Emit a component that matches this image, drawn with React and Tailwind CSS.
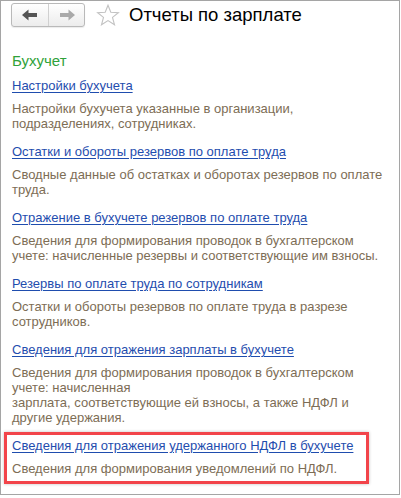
import React from 'react';

const reports = [
  {
    title: 'Настройки бухучета',
    text: 'Настройки бухучета указанные в организации, подразделениях, сотрудниках.',
  },
  {
    title: 'Остатки и обороты резервов по оплате труда',
    text: 'Сводные данные об остатках и оборотах резервов по оплате труда.',
  },
  {
    title: 'Отражение в бухучете резервов по оплате труда',
    text: 'Сведения для формирования проводок в бухгалтерском учете: начисленные резервы и соответствующие им взносы.',
  },
  {
    title: 'Резервы по оплате труда по сотрудникам',
    text: 'Остатки и обороты резервов по оплате труда в разрезе сотрудников.',
  },
  {
    title: 'Сведения для отражения зарплаты в бухучете',
    text: (
      <>
        Сведения для формирования проводок в бухгалтерском учете: начисленная
        <br />
        зарплата, соответствующие ей взносы, а также НДФЛ и другие удержания.
      </>
    ),
  },
  {
    title: 'Сведения для отражения удержанного НДФЛ в бухучете',
    text: 'Сведения для формирования уведомлений по НДФЛ.',
  },
];

const ReportItem = ({ title, text }) => (
  <div className="pb-[13px]">
    <a href="#" className="block text-[13px] leading-[16px] text-[#1f4dae] underline underline-offset-[2px]">
      {title}
    </a>
    <p className="mt-[7px] w-[380px] text-[13px] leading-[15px] text-[#7d6d55]">{text}</p>
  </div>
);

const App = () => {
  return (
    <div
      className="relative w-[401px] h-[498px] bg-white overflow-hidden"
      style={{ fontFamily: '"Liberation Sans", Arial, sans-serif' }}
    >
      <div className="w-[400px] h-[495px] border border-[#a5a5a5]">
        {/* Header */}
        <div className="flex items-center h-[24px] mt-[2px] pl-[10px]">
          <div className="flex h-[24px] w-[74px] rounded-[3px] border border-[#b9b9b9] bg-gradient-to-b from-white to-[#ececec] shadow-[0_1px_1px_rgba(0,0,0,0.08)]">
            <div className="flex w-[37px] items-center justify-center border-r border-[#d0d0d0]">
              <svg width="16" height="12" viewBox="0 0 16 12">
                <path d="M0 6 L6.5 0.5 V4 H15 V8 H6.5 V11.5 Z" fill="#555" />
              </svg>
            </div>
            <div className="flex flex-1 items-center justify-center">
              <svg width="16" height="12" viewBox="0 0 16 12">
                <path d="M16 6 L9.5 0.5 V4 H1 V8 H9.5 V11.5 Z" fill="#a9a9a9" />
              </svg>
            </div>
          </div>
          <svg className="ml-[11px]" width="24" height="22" viewBox="0 0 24 22">
            <path
              d="M12 1.2 L14.8 8.2 L22.4 8.6 L16.5 13.4 L18.5 20.8 L12 16.6 L5.5 20.8 L7.5 13.4 L1.6 8.6 L9.2 8.2 Z"
              fill="none"
              stroke="#c2c2c2"
              strokeWidth="1.1"
              strokeLinejoin="miter"
            />
          </svg>
          <h1 className="ml-[9px] text-[18.5px] leading-[24px] text-black">Отчеты по зарплате</h1>
        </div>

        {/* Content */}
        <div className="pl-[11px] pt-[25px]">
          <h2 className="text-[15px] leading-[18px] text-[#2fa23a]">Бухучет</h2>
          <div className="mt-[8px]">
            {reports.map((r, i) => (
              <ReportItem key={i} title={r.title} text={r.text} />
            ))}
          </div>
        </div>
      </div>

      {/* Annotation frame */}
      <div className="absolute left-[4px] top-[432px] w-[365px] h-[52px] border-[3px] border-[#f2444a] shadow-[0_0_3px_rgba(0,0,0,0.25)]" />
    </div>
  );
};

export default App;
